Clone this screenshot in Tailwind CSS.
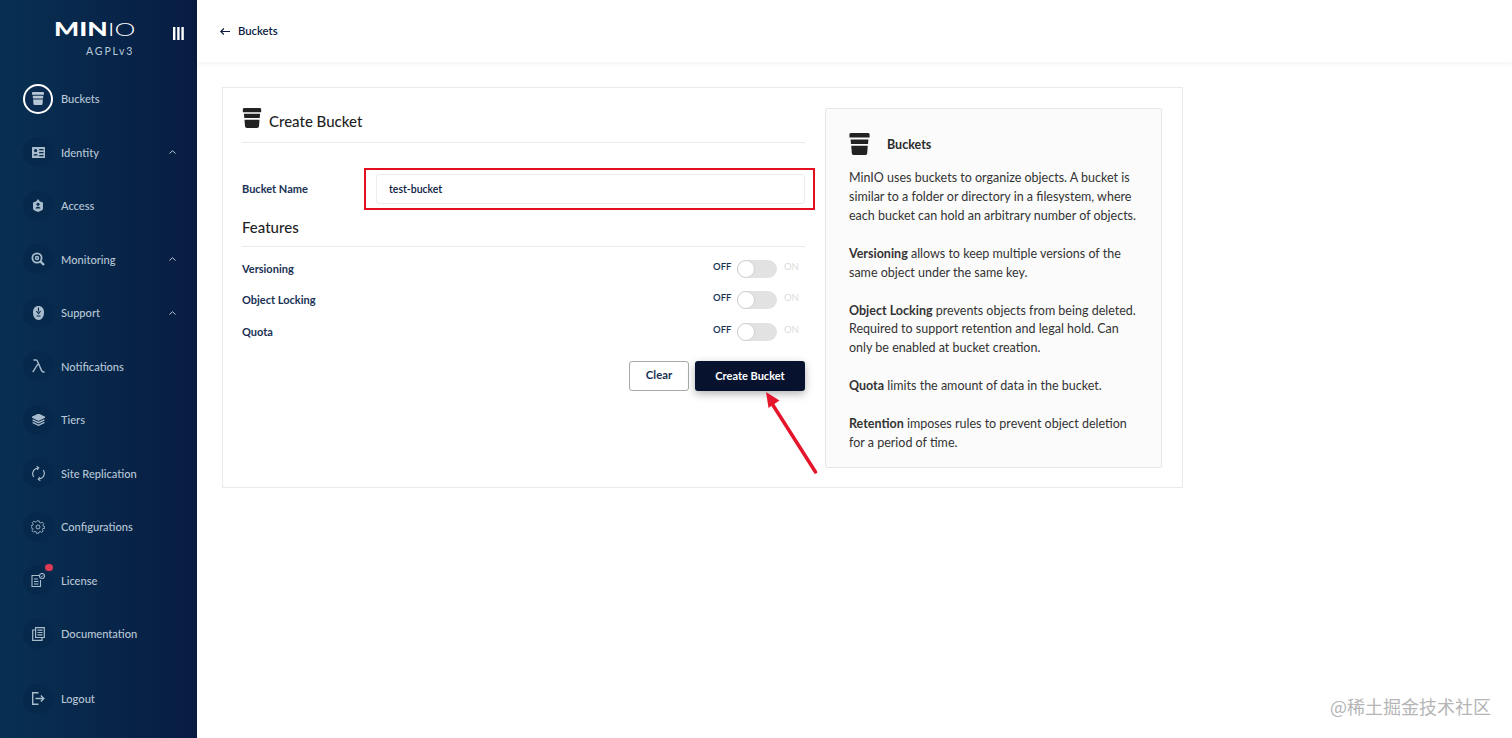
<!DOCTYPE html>
<html lang="en">
<head>
  <meta charset="UTF-8">
  <meta name="viewport" content="width=device-width, initial-scale=1.0">
  <title>MinIO Console - Create Bucket</title>
  <script src="https://cdn.jsdelivr.net/npm/@tailwindcss/browser@4"></script>
</head>
<body class="h-[738px] overflow-hidden bg-white font-['Lato','Liberation_Sans',sans-serif] text-[#07193e]">
  <div class="relative flex h-[738px] w-[1512px]">

    <!-- Sidebar -->
    <aside class="flex h-full w-[197px] shrink-0 flex-col bg-gradient-to-r from-[#073052] to-[#081c42] text-[11.1px] font-medium text-[#b8c7d6]">
      <div class="relative h-[72px] shrink-0">
        <div class="absolute left-[54px] top-[17px] flex h-[24px] w-[54px] origin-left scale-x-[1.47] items-center text-[18px] leading-none text-white">
          <span class="font-black">MIN</span><span class="font-light">IO</span>
        </div>
        <div class="absolute left-[86px] top-[43px] text-[10.5px] font-normal leading-4 tracking-[1.9px] text-[#b8c9da]">AGPLv3</div>
        <svg class="absolute left-[173px] top-[27px] h-[13px] w-[11px]" viewBox="0 0 11 13" fill="#fff"><rect x="0" width="2.4" height="13"/><rect x="4.2" width="2.4" height="13"/><rect x="8.4" width="2.4" height="13"/></svg>
      </div>

      <nav class="flex flex-col [&>a>span:nth-child(2)]:mt-[2px]">
        <a class="flex h-[53.5px] items-center pl-[23px]">
          <span class="flex h-[30px] w-[30px] items-center justify-center rounded-full border-2 border-white bg-[#0a2a50]">
            <svg class="h-[13px] w-[12px]" viewBox="0 0 22 24" fill="#b8c7d6"><path d="M0 1.5Q0 0 2 0H20Q22 0 22 1.5V5H0ZM1.3 7H20.7L20.3 12H1.7ZM2 14H20L19.4 22Q19.3 24 17 24H5Q2.7 24 2.6 22Z"/></svg>
          </span>
          <span class="ml-[8px]">Buckets</span>
        </a>
        <a class="flex h-[53.5px] items-center pl-[23px]">
          <span class="flex h-[30px] w-[30px] items-center justify-center rounded-full bg-[#06284b]">
            <svg class="h-[11px] w-[13px]" viewBox="0 0 13 11" fill="#a9bccd"><path d="M0.5 0H12.5Q13 0 13 .5V10.5Q13 11 12.5 11H.5Q0 11 0 10.5V.5Q0 0 .5 0Z"/><circle cx="3.6" cy="3.6" r="1.6" fill="#06284b"/><path d="M1.4 8.6C1.6 6.6 5.6 6.6 5.8 8.6Z" fill="#06284b"/><rect x="7.2" y="2" width="4.4" height="1.3" fill="#06284b"/><rect x="7.2" y="5" width="4.4" height="1.3" fill="#06284b"/><rect x="7.2" y="8" width="4.4" height="1.3" fill="#06284b"/></svg>
          </span>
          <span class="ml-[8px]">Identity</span>
          <svg class="ml-auto mr-[21px] h-[4px] w-[7px]" viewBox="0 0 7 4" fill="none" stroke="#b8c7d6" stroke-width="1"><path d="M.5 3.5 3.5.7 6.5 3.5"/></svg>
        </a>
        <a class="flex h-[53.5px] items-center pl-[23px]">
          <span class="flex h-[30px] w-[30px] items-center justify-center rounded-full bg-[#06284b]">
            <svg class="h-[13px] w-[10px]" viewBox="0 0 10 13" fill="#a9bccd"><path d="M3 2.5 5 0 7 2.5 10 3.5V9.5Q10 11 8.5 11.5L5 13 1.5 11.5Q0 11 0 9.5V3.5Z"/><circle cx="5" cy="5.2" r="1.5" fill="#06284b"/><path d="M2.6 9.4C2.8 7.2 7.2 7.2 7.4 9.4Z" fill="#06284b"/></svg>
          </span>
          <span class="ml-[8px]">Access</span>
        </a>
        <a class="flex h-[53.5px] items-center pl-[23px]">
          <span class="flex h-[30px] w-[30px] items-center justify-center rounded-full bg-[#06284b]">
            <svg class="h-[14px] w-[14px]" viewBox="0 0 14 14" fill="none" stroke="#a9bccd"><circle cx="6" cy="6" r="4.6" stroke-width="1.8"/><circle cx="6" cy="6" r="1.5" stroke-width="1.4"/><path d="M9.5 9.5 13 13" stroke-width="2.4"/></svg>
          </span>
          <span class="ml-[8px]">Monitoring</span>
          <svg class="ml-auto mr-[21px] h-[4px] w-[7px]" viewBox="0 0 7 4" fill="none" stroke="#b8c7d6" stroke-width="1"><path d="M.5 3.5 3.5.7 6.5 3.5"/></svg>
        </a>
        <a class="flex h-[53.5px] items-center pl-[23px]">
          <span class="flex h-[30px] w-[30px] items-center justify-center rounded-full bg-[#06284b]">
            <svg class="h-[14px] w-[11px]" viewBox="0 0 11 14" fill="#a9bccd"><path d="M5.5 0C9 0 11 2.6 11 6.5 11 10.8 8.8 14 5.5 14 2.2 14 0 10.8 0 6.5 0 2.6 2 0 5.5 0Z"/><path d="M5.5 1.5V5.5M3.4 5 5.500 7.600 7.600 5M3.500 10H7.500" stroke="#06284b" stroke-width="1.100" fill="none"/></svg>
          </span>
          <span class="ml-[8px]">Support</span>
          <svg class="ml-auto mr-[21px] h-[4px] w-[7px]" viewBox="0 0 7 4" fill="none" stroke="#b8c7d6" stroke-width="1"><path d="M.5 3.5 3.5.7 6.5 3.5"/></svg>
        </a>
        <a class="flex h-[53.5px] items-center pl-[23px]">
          <span class="flex h-[30px] w-[30px] items-center justify-center rounded-full bg-[#06284b]">
            <svg class="h-[14px] w-[13px]" viewBox="0 0 13 14" fill="none" stroke="#a9bccd" stroke-width="1.4"><path d="M1.500 1H4Q5 1 5.600 2.500L9.600 11.600Q10.200 13 11.500 13H12.600M5.900 5 .8 13.200"/></svg>
          </span>
          <span class="ml-[8px]">Notifications</span>
        </a>
        <a class="flex h-[53.5px] items-center pl-[23px]">
          <span class="flex h-[30px] w-[30px] items-center justify-center rounded-full bg-[#06284b]">
            <svg class="h-[12px] w-[13px]" viewBox="0 0 13 12" fill="none" stroke="#a9bccd"><path d="M6.500 0 13 3.200 6.500 6.400 0 3.200Z" fill="#a9bccd"/><path d="M.6 5.800 6.500 8.700 12.400 5.800M.6 8.400 6.500 11.300 12.400 8.400" stroke-width="1.300"/></svg>
          </span>
          <span class="ml-[8px]">Tiers</span>
        </a>
        <a class="flex h-[53.5px] items-center pl-[23px]">
          <span class="flex h-[30px] w-[30px] items-center justify-center rounded-full bg-[#06284b]">
            <svg class="h-[15px] w-[13px]" viewBox="0 0 13 15" fill="none" stroke="#a9bccd" stroke-width="1.200"><path d="M1.800 11A5.600 5.600 0 0 1 3.600 2.700L6.500 1.800"/><path d="M4.700 .3 6.700 1.800 5 4"/><path d="M11.200 4A5.600 5.600 0 0 1 9.400 12.300L6.500 13.200"/><path d="M8.300 14.700 6.300 13.200 8 11"/></svg>
          </span>
          <span class="ml-[8px]">Site Replication</span>
        </a>
        <a class="flex h-[53.5px] items-center pl-[23px]">
          <span class="flex h-[30px] w-[30px] items-center justify-center rounded-full bg-[#06284b]">
            <svg class="h-[14px] w-[14px]" viewBox="0 0 24 24" fill="none" stroke="#a9bccd" stroke-width="1.600"><path d="M10 2h4l.6 3 2.500 1 2.600-1.600 2.800 2.800L20.900 9.800l1 2.500 3 .6-.9 3.200-3-.2-1 2.300 1.500 2.600-2.800 2.400-2.600-1.600-2.300 1-.8 2.400h-4l-.6-2.800-2.400-1-2.600 1.600-2.800-2.800L3 17.900l-1-2.400-3-.6v-3.900l3-.6 1-2.400L1.400 5.400l2.800-2.800L6.800 4.200l2.400-1Z" transform="translate(.9 -.4) scale(.93)"/><circle cx="12" cy="12" r="3.400"/></svg>
          </span>
          <span class="ml-[8px]">Configurations</span>
        </a>
        <a class="relative flex h-[53.5px] items-center pl-[23px]">
          <span class="flex h-[30px] w-[30px] items-center justify-center rounded-full bg-[#06284b]">
            <svg class="h-[14px] w-[14px]" viewBox="0 0 14 14" fill="none" stroke="#a9bccd" stroke-width="1.100"><path d="M8 2.500H1V13.500H9.500V7"/><path d="M3 6H7M3 8.500H7.500M3 11H7.500"/><circle cx="11" cy="3" r="2.500"/><path d="M10 3 10.800 3.800 12 2.400" stroke-width=".8"/></svg>
          </span>
          <span class="ml-[8px]">License</span>
          <span class="absolute left-[45px] top-[10px] h-[7.500px] w-[7.500px] rounded-full bg-[#dc3a55]"></span>
        </a>
        <a class="flex h-[53.5px] items-center pl-[23px]">
          <span class="flex h-[30px] w-[30px] items-center justify-center rounded-full bg-[#06284b]">
            <svg class="h-[14px] w-[13px]" viewBox="0 0 13 14" fill="none" stroke="#a9bccd" stroke-width="1.200"><path d="M3.600.7H12.300V10.500H3.600Z"/><path d="M5.500 3.200H10.500M5.500 5.500H10.500M5.500 7.800H10.500"/><path d="M3.600 3H.7V13.300H10V10.500"/></svg>
          </span>
          <span class="ml-[8px]">Documentation</span>
        </a>
        <a class="mt-[11.500px] flex h-[53.5px] items-center pl-[23px]">
          <span class="flex h-[30px] w-[30px] items-center justify-center rounded-full bg-[#06284b]">
            <svg class="h-[13px] w-[13px]" viewBox="0 0 13 13" fill="none" stroke="#a9bccd" stroke-width="1.400"><path d="M6.500.7H.7V12.300H6.500"/><path d="M3.500 6.500H11.500M8.800 3.500 11.800 6.500 8.800 9.500"/></svg>
          </span>
          <span class="ml-[8px]">Logout</span>
        </a>
      </nav>
    </aside>

    <!-- Main -->
    <main class="flex min-w-0 flex-1 flex-col">
      <header class="flex h-[62px] shrink-0 items-center bg-white pl-[23px] text-[11.300px] text-[#07193e] shadow-[0_2px_6px_rgba(0,0,0,0.05)]">
        <svg class="h-[7px] w-[10px]" viewBox="0 0 10 7" fill="none" stroke="#07193e" stroke-width="1.100"><path d="M10 3.500H1M3.800.5 .8 3.500 3.800 6.500"/></svg>
        <span class="ml-[8px] font-semibold">Buckets</span>
      </header>

      <section class="ml-[25px] mt-[25px] flex h-[401px] w-[961px] gap-[20px] border border-[#eaeaea] bg-white pl-[19px] pr-[20px] pt-[20px]">
        <!-- Form -->
        <div class="w-[563px] shrink-0">
          <div class="flex h-[35px] items-start border-b border-[#eaeaea]">
            <svg class="mr-[7px] h-[20px] w-[20px]" viewBox="0 0 22 24" fill="#222"><path d="M0 1.500Q0 0 2 0H20Q22 0 22 1.500V5H0ZM1.300 7H20.700L20.300 12H1.700ZM2 14H20L19.400 22Q19.300 24 17 24H5Q2.700 24 2.600 22Z"/></svg>
            <h1 class="mt-[3px] text-[15px] font-medium leading-5 text-[#1f1f1f]">Create Bucket</h1>
          </div>

          <div class="mt-[31px] flex h-[30px] items-center">
            <label class="w-[134px] text-[11px] font-bold text-[#183153]">Bucket Name</label>
            <div class="flex h-[30px] flex-1 items-center rounded-[3px] border border-[#ececec] pl-[12px] pt-[1px] text-[10.500px] font-semibold text-[#07193e]">test-bucket</div>
          </div>

          <h2 class="mt-[13px] flex h-[30px] items-center border-b border-[#eaeaea] pb-[8px] text-[15px] font-medium text-[#1f1f1f]">Features</h2>

          <div class="mt-[6px] flex h-[31.500px] items-center justify-between text-[11px] font-bold text-[#183153]">
            <span>Versioning</span>
            <span class="mr-[6px] flex items-center text-[9.500px]">
              <span class="-mt-[4px] w-[24px] font-semibold">OFF</span>
              <span class="relative h-[18px] w-[40px] rounded-full bg-[#e2e2e2]"><span class="absolute left-0 top-0 h-[18px] w-[18px] rounded-full border border-[#d0d0d0] bg-white"></span></span>
              <span class="-mt-[4px] ml-[7px] w-[15px] font-normal text-[#dcdcdc]">ON</span>
            </span>
          </div>
          <div class="flex h-[31.500px] items-center justify-between text-[11px] font-bold text-[#183153]">
            <span>Object Locking</span>
            <span class="mr-[6px] flex items-center text-[9.500px]">
              <span class="-mt-[4px] w-[24px] font-semibold">OFF</span>
              <span class="relative h-[18px] w-[40px] rounded-full bg-[#e2e2e2]"><span class="absolute left-0 top-0 h-[18px] w-[18px] rounded-full border border-[#d0d0d0] bg-white"></span></span>
              <span class="-mt-[4px] ml-[7px] w-[15px] font-normal text-[#dcdcdc]">ON</span>
            </span>
          </div>
          <div class="flex h-[31.500px] items-center justify-between text-[11px] font-bold text-[#183153]">
            <span>Quota</span>
            <span class="mr-[6px] flex items-center text-[9.500px]">
              <span class="-mt-[4px] w-[24px] font-semibold">OFF</span>
              <span class="relative h-[18px] w-[40px] rounded-full bg-[#e2e2e2]"><span class="absolute left-0 top-0 h-[18px] w-[18px] rounded-full border border-[#d0d0d0] bg-white"></span></span>
              <span class="-mt-[4px] ml-[7px] w-[15px] font-normal text-[#dcdcdc]">ON</span>
            </span>
          </div>

          <div class="mt-[13px] flex justify-end gap-[6px]">
            <button class="h-[30px] w-[60px] rounded-[3px] border border-[#a9a9a9] bg-white text-[11.300px] font-bold text-[#183153]">Clear</button>
            <button class="h-[30px] w-[110px] rounded-[3px] bg-[#07132e] pt-[1px] text-[11px] font-bold text-white shadow-[0_3px_8px_rgba(0,0,0,0.3)]">Create Bucket</button>
          </div>
        </div>

        <!-- Help box -->
        <div class="h-[360px] w-[337px] shrink-0 rounded-[2px] border border-[#e6e6e6] bg-[#fbfbfb] pl-[23px] pr-[20px] pt-[23px] text-[12.500px] leading-[18.930px] text-[#333]">
          <div class="flex h-[24px] items-center">
            <svg class="h-[22px] w-[21px]" viewBox="0 0 22 24" fill="#222"><path d="M0 1.500Q0 0 2 0H20Q22 0 22 1.500V5H0ZM1.300 7H20.700L20.300 12H1.700ZM2 14H20L19.400 22Q19.300 24 17 24H5Q2.700 24 2.600 22Z"/></svg>
            <span class="ml-[17px] mt-[2px] text-[12.500px] font-bold text-[#2a2a2a]">Buckets</span>
          </div>
          <p class="mt-[13px]">MinIO uses buckets to organize objects. A bucket is similar to a folder or directory in a filesystem, where each bucket can hold an arbitrary number of objects.</p>
          <p class="mt-[18.930px]"><b>Versioning</b> allows to keep multiple versions of the same object under the same key.</p>
          <p class="mt-[18.930px]"><b>Object Locking</b> prevents objects from being deleted. Required to support retention and legal hold. Can only be enabled at bucket creation.</p>
          <p class="mt-[18.930px]"><b>Quota</b> limits the amount of data in the bucket.</p>
          <p class="mt-[18.930px]"><b>Retention</b> imposes rules to prevent object deletion for a period of time.</p>
        </div>
      </section>
    </main>

    <!-- Annotations drawn over the screenshot -->
    <div class="absolute left-[364px] top-[168px] h-[42px] w-[451px] border-2 border-[#e4101f]"></div>
    <svg class="absolute left-[760px] top-[385px] h-[95px] w-[62px]" viewBox="0 0 62 95"><path d="M11 17 55.500 87" stroke="#e5162c" stroke-width="3.500" stroke-linecap="round" fill="none"/><path d="M6 7 19.500 15.500 8.500 23Z" fill="#e5162c"/></svg>

    <div class="absolute left-[1330px] top-[694px] font-['Noto_Sans_CJK_SC',sans-serif] text-[18px] leading-6 text-[#b5b5b5]">@稀土掘金技术社区</div>
  </div>
</body>
</html>
